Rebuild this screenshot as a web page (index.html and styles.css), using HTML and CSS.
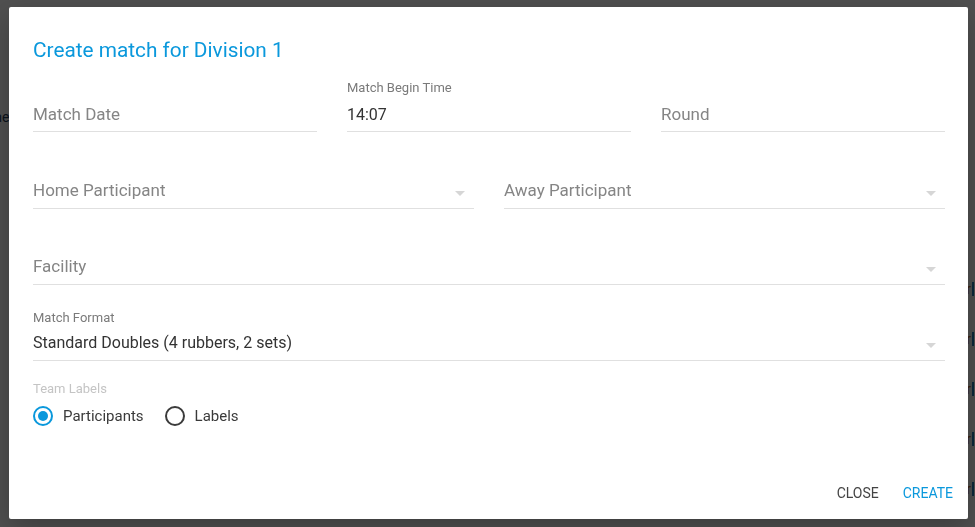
FILE: index.html
```html
<!DOCTYPE html>
<html>
<head>
<meta charset="utf-8">
<link rel="stylesheet" href="styles.css">
</head>
<body>
<div class="page">
  <div class="page-left">Pipeline</div>
  <div class="page-right">
    <div class="page-row">Clear <span class="bar"></span></div>
    <div class="page-row">Clear <span class="bar"></span></div>
    <div class="page-row">Clear <span class="bar"></span></div>
    <div class="page-row">Clear <span class="bar"></span></div>
    <div class="page-row">Clear <span class="bar"></span></div>
  </div>
</div>
<div class="overlay">
  <div class="dialog">
    <h3 class="title">Create match for Division 1</h3>
    <div class="body">
      <div class="row row-three row-first">
        <div class="field"><div class="value placeholder">Match Date</div></div>
        <div class="field"><div class="flabel">Match Begin Time</div><div class="value">14:07</div></div>
        <div class="field"><div class="value placeholder">Round</div></div>
      </div>
      <div class="row row-two">
        <div class="field select"><div class="value placeholder">Home Participant</div><span class="arrow"></span></div>
        <div class="field select"><div class="value placeholder">Away Participant</div><span class="arrow"></span></div>
      </div>
      <div class="row">
        <div class="field select"><div class="value placeholder">Facility</div><span class="arrow"></span></div>
      </div>
      <div class="row">
        <div class="field select"><div class="flabel">Match Format</div><div class="value">Standard Doubles (4 rubbers, 2 sets)</div><span class="arrow"></span></div>
      </div>
      <div class="radio-block">
        <div class="radio-title">Team Labels</div>
        <div class="radios">
          <label class="radio checked">
            <svg class="radio-icon" viewBox="0 0 24 24" width="24" height="24"><circle cx="12" cy="12" r="9" fill="none" stroke="#0a98dc" stroke-width="2"/><circle cx="12" cy="12" r="5" fill="#0a98dc"/></svg>
            <span>Participants</span>
          </label>
          <label class="radio">
            <svg class="radio-icon" viewBox="0 0 24 24" width="24" height="24"><circle cx="12" cy="12" r="9" fill="none" stroke="#3b3b3b" stroke-width="2"/></svg>
            <span>Labels</span>
          </label>
        </div>
      </div>
    </div>
    <div class="actions">
      <button class="btn">Close</button>
      <button class="btn primary">Create</button>
    </div>
  </div>
</div>
</body>
</html>
```
FILE: styles.css
```css
* { box-sizing: border-box; }
html, body {
  margin: 0;
  padding: 0;
  width: 975px;
  height: 527px;
  overflow: hidden;
  font-family: Roboto, "Liberation Sans", sans-serif;
  background: #ffffff;
}
.page {
  position: relative;
  width: 975px;
  height: 527px;
  display: flex;
  justify-content: space-between;
}
.page-left {
  padding-top: 109px;
  margin-left: -40px;
  font-size: 14px;
  color: #1f3a5a;
}
.page-right {
  padding-top: 279px;
  margin-right: 1px;
  display: flex;
  flex-direction: column;
  gap: 30px;
}
.page-row {
  font-size: 14px;
  height: 20px;
  line-height: 20px;
  color: #b8651e;
  display: flex;
  align-items: center;
  gap: 1px;
}
.bar {
  display: inline-block;
  width: 2px;
  height: 14px;
  background: #2a7fc0;
}
.overlay {
  position: fixed;
  inset: 0;
  background: rgba(0, 0, 0, 0.69);
  padding: 7px 7px 8px 9px;
}
.dialog {
  width: 959px;
  height: 512px;
  background: #ffffff;
  border-radius: 2px;
  display: flex;
  flex-direction: column;
  box-shadow: 0 10px 30px rgba(0, 0, 0, 0.25);
}
.title {
  margin: 0;
  padding: 28px 24px 0 24px;
  font-size: 20.8px;
  line-height: 31px;
  font-weight: 400;
  color: #0a98dc;
}
.body {
  flex: 1;
  padding: 0 23px 0 24px;
  display: flex;
  flex-direction: column;
  gap: 10px;
}
.row {
  display: flex;
  gap: 30px;
}
.row-first { margin-bottom: 1px; }
.field {
  flex: 1;
  height: 66px;
  position: relative;
  display: flex;
  flex-direction: column;
  justify-content: flex-end;
  padding-bottom: 4px;
  border-bottom: 1px solid #e0e0e0;
}
.field.select { padding-bottom: 5px; }
.flabel {
  font-size: 13px;
  line-height: 16px;
  color: #7a7a7a;
  margin-bottom: 5px;
}
.row-first .flabel { margin-bottom: 7px; }
.value {
  font-size: 16px;
  line-height: 24px;
  color: #333333;
}
.value.placeholder { color: #858585; font-size: 17px; margin-bottom: 1px; }
.arrow {
  position: absolute;
  right: 9px;
  bottom: 12px;
  width: 0;
  height: 0;
  border-left: 5.5px solid transparent;
  border-right: 5.5px solid transparent;
  border-top: 5px solid #d6d6d6;
}
.radio-block {
  padding-top: 10px;
}
.radio-title {
  font-size: 13px;
  line-height: 16px;
  color: #c4c4c4;
}
.radios {
  display: flex;
  align-items: center;
  margin-top: 7px;
  margin-left: -2px;
}
.radio {
  display: flex;
  align-items: center;
  font-size: 15px;
  color: #3a3a3a;
  margin-right: 19px;
}
.radio-icon { display: block; margin-right: 8px; }
.actions {
  display: flex;
  justify-content: flex-end;
  padding: 8px 7px 8px 8px;
  gap: 8px;
}
.btn {
  height: 36px;
  border: none;
  background: transparent;
  font-family: Roboto, "Liberation Sans", sans-serif;
  font-size: 14px;
  text-transform: uppercase;
  color: #444444;
  padding: 0 8px;
  cursor: pointer;
}
.btn.primary { color: #0a98dc; }
```
